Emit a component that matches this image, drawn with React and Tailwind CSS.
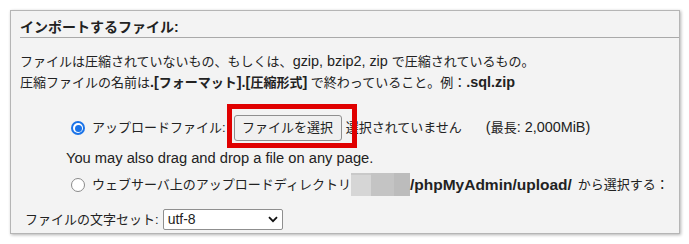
import React from 'react';

const jp = { fontFamily: '"Liberation Sans", "Noto Sans CJK JP", sans-serif' };

const Radio = ({ checked }) =>
  checked ? (
    <span className="w-[14px] h-[14px] rounded-full bg-[#1a73e8] flex items-center justify-center shrink-0">
      <span className="w-[10px] h-[10px] rounded-full bg-white flex items-center justify-center">
        <span className="w-[7px] h-[7px] rounded-full bg-[#1a73e8]" />
      </span>
    </span>
  ) : (
    <span className="block w-[14px] h-[14px] rounded-full border border-[#8a8a8a] bg-white shrink-0" />
  );

// latin runs inside the Japanese text render a bit wider in the original
const L = ({ children }) => <span className="text-[14.4px]">{children}</span>;

export default function App() {
  return (
    <div className="w-[689px] h-[244px] bg-white pt-[10px] pl-[10px] text-[#222]" style={jp}>
      <div className="w-[670px] h-[224px] bg-[#f3f3f3] border border-[#b5b5b5] shadow-[1px_1px_3px_rgba(0,0,0,0.3)]">
        <div className="ml-[9px] h-[27px] pt-[5px] border-b border-[#a9a9a9] flex items-center">
          <span className="text-[14px] font-bold leading-none">インポートするファイル:</span>
        </div>
        <div className="pl-[9px] pt-[13px] text-[13px] leading-[20px]">
          <p>
            ファイルは圧縮されていないもの、もしくは、<L>gzip, bzip2, zip </L>で圧縮されているもの。
          </p>
          <p>
            圧縮ファイルの名前は
            <b>
              <L>.[</L>フォーマット<L>].[</L>圧縮形式<L>]</L>
            </b>{' '}
            で終わっていること。例：<b><L>.sql.zip</L></b>
          </p>
        </div>
        <div className="relative flex items-center mt-[22px] h-[26px] text-[13px]">
          <div className="ml-[60px]">
            <Radio checked />
          </div>
          <span className="ml-[7px]">アップロードファイル:</span>
          <div className="ml-[8px] w-[108px] h-[26px] border border-[#8f8f8f] rounded-[3px] bg-[#f0f0f0] flex items-center justify-center">
            ファイルを選択
          </div>
          <span className="ml-[4px]">選択されていません</span>
          <span className="ml-[24px]">
            <L>(</L>最長<L>: 2,000MiB)</L>
          </span>
          <div className="absolute left-[216px] top-[-11px] w-[130px] h-[44px] border-[5px] border-[#e00000]" />
        </div>
        <p className="ml-[55px] mt-[7px] text-[14.7px] leading-[20px]">You may also drag and drop a file on any page.</p>
        <div className="flex items-center h-[24px] mt-[5px] text-[13px]">
          <div className="ml-[60px]">
            <Radio />
          </div>
          <span className="ml-[7px]">ウェブサーバ上のアップロードディレクトリ</span>
          <div className="flex items-start h-[23px] mt-[-2px]">
            <span className="w-[20px] h-[23px] bg-[#d6d6d6] border-t-2 border-[#c9c9c9]" />
            <span className="w-[23px] h-[23px] bg-[#c4c4c4]" />
            <span className="w-[16px] h-[23px] bg-[#bcbcbc]" />
          </div>
          <b className="text-[15.5px]">/phpMyAdmin/upload/</b>
          <span className="ml-[6px]">から選択する：</span>
        </div>
        <div className="flex items-center h-[21px] mt-[12px] ml-[14px] text-[13px]">
          <span>ファイルの文字セット:</span>
          <div className="ml-[4px] w-[120px] h-[21px] bg-white border border-[#8f8f8f] rounded-[2px] flex items-center justify-between pl-[4px] pr-[4px]">
            <span className="text-[14px]">utf-8</span>
            <svg width="10" height="7" viewBox="0 0 10 7">
              <path d="M1 1.2 L5 5.2 L9 1.2" fill="none" stroke="#111" strokeWidth="1.8" />
            </svg>
          </div>
        </div>
      </div>
    </div>
  );
}
